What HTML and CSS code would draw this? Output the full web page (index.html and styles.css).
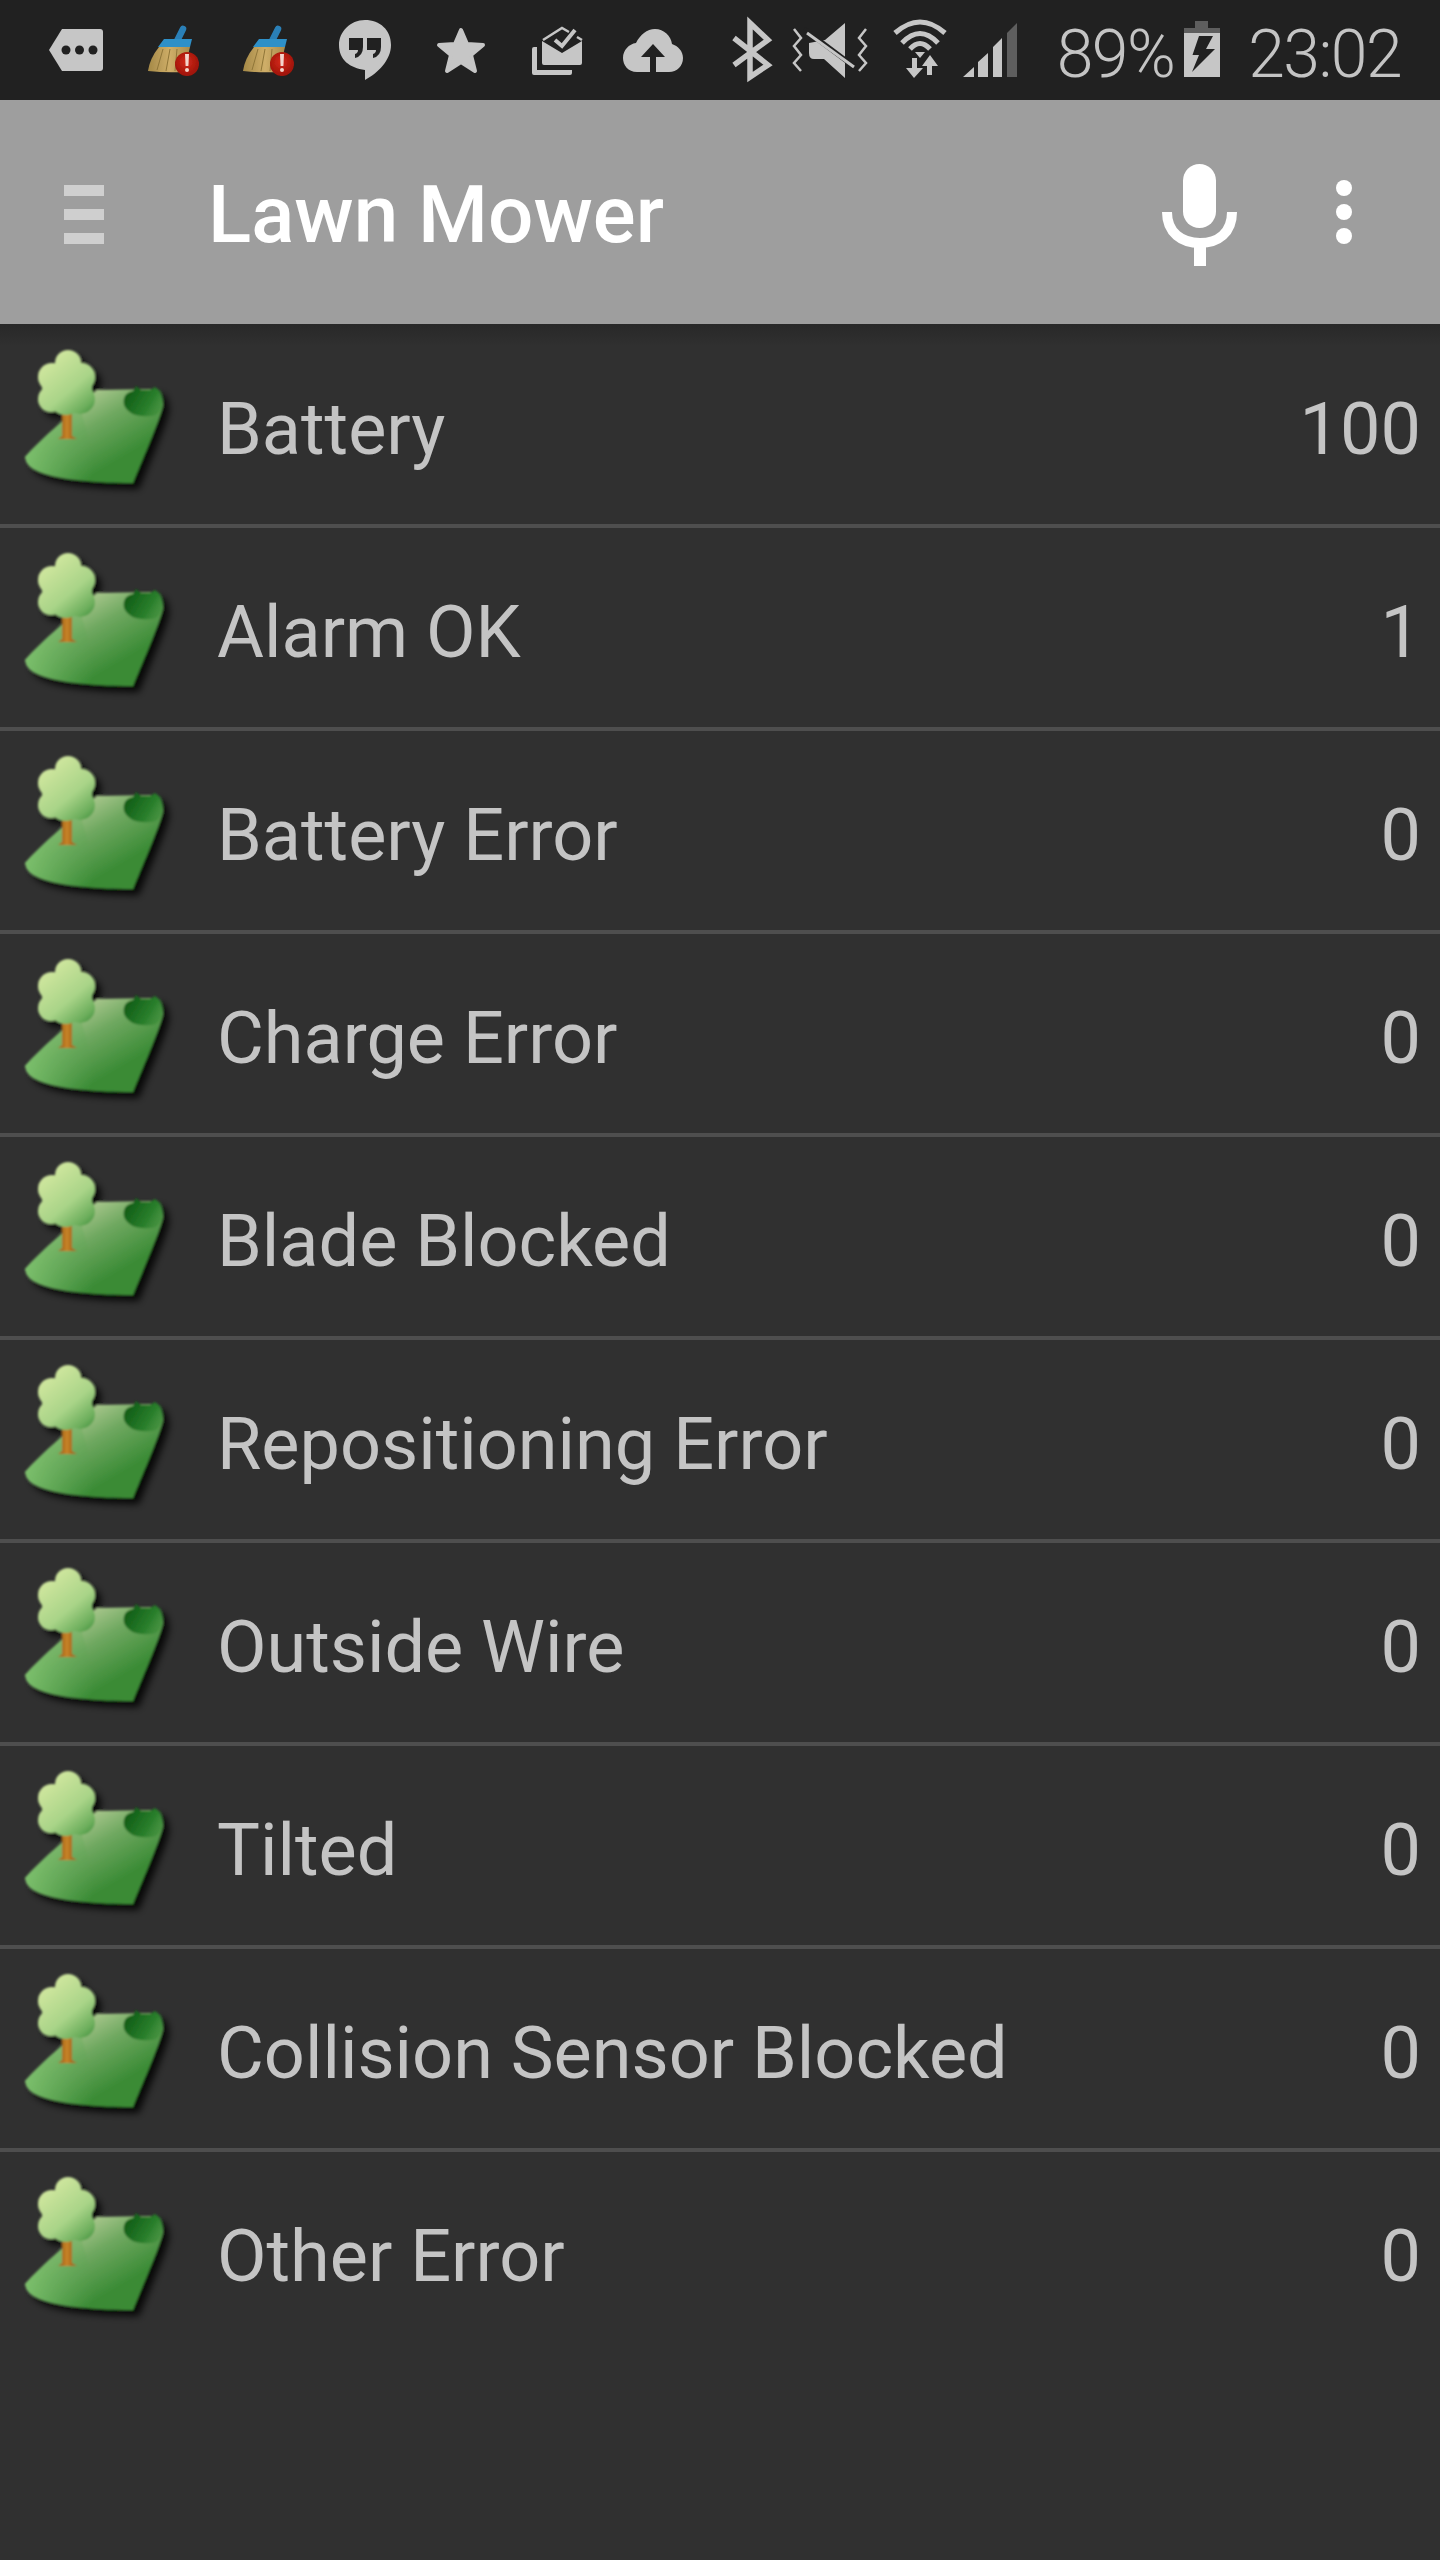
FILE: index.html
```html
<!DOCTYPE html>
<html lang="en">
<head>
<meta charset="utf-8">
<title>Lawn Mower</title>
<link rel="stylesheet" href="styles.css">
</head>
<body>
<svg class="sprite" aria-hidden="true">
  <defs>
    <linearGradient id="crown" gradientUnits="userSpaceOnUse" x1="45" y1="34" x2="92" y2="90">
      <stop offset="0" stop-color="#d3e8a0"/><stop offset=".55" stop-color="#a9d488"/><stop offset=".85" stop-color="#6cae5c"/><stop offset="1" stop-color="#3f8f3b"/>
    </linearGradient>
    <linearGradient id="ground" gradientUnits="userSpaceOnUse" x1="88" y1="62" x2="128" y2="130">
      <stop offset="0" stop-color="#b4cd95"/><stop offset=".45" stop-color="#6fa860"/><stop offset="1" stop-color="#3a8b35"/>
    </linearGradient>
    <linearGradient id="groundLeft" gradientUnits="userSpaceOnUse" x1="25" y1="130" x2="95" y2="140">
      <stop offset="0" stop-color="#7cc06c"/><stop offset="1" stop-color="#4f9f49" stop-opacity="0"/>
    </linearGradient>
    <linearGradient id="bush" gradientUnits="userSpaceOnUse" x1="128" y1="66" x2="164" y2="88">
      <stop offset="0" stop-color="#0f5c15"/><stop offset=".6" stop-color="#2a7f2c"/><stop offset="1" stop-color="#3f8f3a" stop-opacity=".4"/>
    </linearGradient>
    <linearGradient id="trunk" gradientUnits="userSpaceOnUse" x1="62" y1="0" x2="72" y2="0">
      <stop offset="0" stop-color="#a96a1c"/><stop offset=".5" stop-color="#c98428"/><stop offset="1" stop-color="#a8681b"/>
    </linearGradient>
    <linearGradient id="bristle" gradientUnits="userSpaceOnUse" x1="150" y1="0" x2="190" y2="0">
      <stop offset="0" stop-color="#a88c4a"/><stop offset=".5" stop-color="#cfae68"/><stop offset="1" stop-color="#a98c4c"/>
    </linearGradient>
    <radialGradient id="badge" gradientUnits="userSpaceOnUse" cx="186" cy="62" r="13">
      <stop offset="0" stop-color="#d42a1a"/><stop offset="1" stop-color="#a01409"/>
    </radialGradient>
    <filter id="soft" x="-20%" y="-20%" width="140%" height="140%">
      <feGaussianBlur stdDeviation="1.1"/>
    </filter>
    <filter id="shade" x="-20%" y="-20%" width="150%" height="150%">
      <feDropShadow dx="6" dy="6" stdDeviation="3.5" flood-color="#000" flood-opacity=".85"/>
    </filter>
    <filter id="tiny" x="-10%" y="-10%" width="120%" height="120%">
      <feGaussianBlur stdDeviation=".4"/>
    </filter>
    <symbol id="lawn" viewBox="0 0 200 199">
      <g filter="url(#shade)">
        <g filter="url(#soft)">
          <path fill="url(#ground)" d="M25 132C40 115 75 85 97 65L150 64Q162 64 163 80C160 95 140 140 133 158C100 158 60 155 40 147Q26 142 25 132Z"/>
          <path fill="url(#groundLeft)" d="M25 132C40 115 62 96 80 81L100 157C75 156 55 153 40 147Q26 142 25 132Z"/>
          <path fill="url(#bush)" d="M124 80Q122 68 133 66L136 61L141 65L150 65L155 62L160 66Q164 72 162 82Q158 92 150 91Q130 93 124 80Z"/>
          <path fill="url(#trunk)" d="M62 88H72V111L77 114H58L62 111Z"/>
          <g fill="url(#crown)">
            <circle cx="68" cy="38" r="13"/><circle cx="52" cy="52" r="14"/><circle cx="81" cy="52" r="14"/>
            <circle cx="51" cy="74" r="13"/><circle cx="80" cy="74" r="15"/><circle cx="67" cy="62" r="25"/><circle cx="66" cy="73" r="17"/>
          </g>
        </g>
      </g>
    </symbol>
    <symbol id="broom" viewBox="125 0 96 100">
      <g filter="url(#tiny)">
        <path fill="none" stroke="#2b80b8" stroke-width="6.5" stroke-linecap="round" d="M183 29L177 41"/>
        <path fill="url(#bristle)" d="M159 47Q150 58 148 71Q166 73 184 72L190 47Z"/>
        <path fill="none" stroke="#8f7538" stroke-width="1" d="M163 49L157 70M170 49L166 71M177 49L175 71"/>
        <path fill="#2f90c8" d="M164 39H192L190 47H158Z"/>
        <circle cx="187" cy="64" r="12" fill="url(#badge)"/>
        <path fill="#f4d5cc" d="M185 54H189L188.4 66H185.6Z"/>
        <circle cx="187" cy="70" r="2" fill="#f4d5cc"/>
      </g>
    </symbol>
  </defs>
</svg>

<header class="status">
  <div class="status-left">
    <svg class="cell" viewBox="29 0 96 100"><path class="ic" d="M49 50L62 29H100Q103 29 103 32V68Q103 71 100 71H62Z"/><g class="cut"><circle cx="66" cy="50" r="4.5"/><circle cx="79.500" cy="50" r="4.500"/><circle cx="93" cy="50" r="4.500"/></g></svg>
    <svg class="cell" viewBox="125 0 96 100"><use href="#broom" x="125" y="0" width="96" height="100"/></svg>
    <svg class="cell" viewBox="126 0 96 100"><use href="#broom" x="125" y="0" width="96" height="100"/></svg>
    <svg class="cell" viewBox="317 0 96 100"><path class="ic" d="M365 20C350 20 339 32 339 45C339 60 350 68 365 70V80C378 73 391 60 391 45C391 30 380 20 365 20Z"/><path class="cut" d="M349 38H363V47Q363 56 355 58V54Q358 53 358 50H349ZM367 38H381V47Q381 56 373 58V54Q376 53 376 50H367Z"/></svg>
    <svg class="cell" viewBox="413 0 96 100"><path class="ic star" d="M461 30L467 44L483 45L471 55L475 71L461 62L447 71L451 55L439 45L455 44Z"/></svg>
    <svg class="cell" viewBox="509 0 96 100"><path class="ic" d="M542 41L562 53L582 41V63Q582 65 580 65H544Q542 65 542 63Z"/><path class="ic" d="M532 49Q532 47 534 47H537V70H572V73Q572 75 570 75H534Q532 75 532 73Z"/><path class="line" d="M543 40L562 28L569 32M577 37L582 40"/><path class="check" d="M555 40L562 46L575 30"/></svg>
    <svg class="cell" viewBox="605 0 96 100"><path class="ic" d="M637 72C628 72 623 65 623 58C623 50 629 44 636 43C640 35 647 29 655 29C664 29 671 36 672 44C678 46 683 51 683 58C683 66 677 72 669 72Z"/><path class="cut" d="M653 44L665 57H656V72H650V57H641Z"/></svg>
  </div>
  <div class="status-right">
    <svg class="bt" viewBox="725 0 60 100"><path class="line thick" d="M738 38L772 65L754 77V23L772 40L738 65"/></svg>
    <svg class="vib" viewBox="785 0 100 100"><path class="line" d="M798 29L805 38L798 46L805 55L798 63L805 71M870 29L863 38L870 46L863 55L870 63L863 71"/><path class="ic" d="M849 23V78L828 59H818Q813 59 813 53V43L829 40Z"/><path class="gap" d="M808 29L860 68"/><path class="line slash" d="M811 33L858 67"/></svg>
    <svg class="wifi" viewBox="885 0 75 100"><path class="line arc" d="M899 33Q924 11 949 33M906 43Q924 24 942 43M914 49Q924 38 934 49"/><path class="ic" d="M919 52H929L924 58ZM916 58H921V68H927L918 78L910 68H916ZM934 55L942 66H936V75H931V66H926Z"/></svg>
    <svg class="signal" viewBox="960 0 70 100"><path class="ic" d="M967 77L978 67V77ZM982 62L992 53V77H982ZM997 47L1006 38V77H997Z"/><path class="dim" d="M1011 33L1021 23V77H1011Z"/></svg>
    <span class="pct">89%</span>
    <svg class="batt" viewBox="1180 0 48 100"><path class="dim" d="M1197 21H1210V28H1222V33H1186V28H1197Z"/><path class="ic" d="M1186 33H1222V77H1186Z"/><path class="cut" d="M1201 36H1215L1208 49H1217L1194 72L1201 55H1194.500Z"/></svg>
    <span class="clock">23:02</span>
  </div>
</header>

<div class="toolbar">
  <div class="burger"><span></span><span></span><span></span></div>
  <h1 class="title">Lawn Mower</h1>
  <svg class="mic" viewBox="1150 150 100 130"><rect class="white" x="1183" y="164" width="33" height="64" rx="16.500"/><path class="mic-arc" d="M1167 212C1167 233 1182 243 1200 243C1218 243 1232 233 1232 212"/><rect class="white" x="1194" y="243" width="12" height="23"/></svg>
  <svg class="dots" viewBox="1320 170 48 84"><circle class="white" cx="1344" cy="188" r="8"/><circle class="white" cx="1344" cy="212" r="8"/><circle class="white" cx="1344" cy="236" r="8"/></svg>
</div>

<ul class="list">
  <li class="row"><svg class="lawn"><use href="#lawn"/></svg><span class="name">Battery</span><span class="value">100</span></li>
  <li class="row"><svg class="lawn"><use href="#lawn"/></svg><span class="name">Alarm OK</span><span class="value">1</span></li>
  <li class="row"><svg class="lawn"><use href="#lawn"/></svg><span class="name">Battery Error</span><span class="value">0</span></li>
  <li class="row"><svg class="lawn"><use href="#lawn"/></svg><span class="name">Charge Error</span><span class="value">0</span></li>
  <li class="row"><svg class="lawn"><use href="#lawn"/></svg><span class="name">Blade Blocked</span><span class="value">0</span></li>
  <li class="row"><svg class="lawn"><use href="#lawn"/></svg><span class="name">Repositioning Error</span><span class="value">0</span></li>
  <li class="row"><svg class="lawn"><use href="#lawn"/></svg><span class="name">Outside Wire</span><span class="value">0</span></li>
  <li class="row"><svg class="lawn"><use href="#lawn"/></svg><span class="name">Tilted</span><span class="value">0</span></li>
  <li class="row"><svg class="lawn"><use href="#lawn"/></svg><span class="name">Collision Sensor Blocked</span><span class="value">0</span></li>
  <li class="row"><svg class="lawn"><use href="#lawn"/></svg><span class="name">Other Error</span><span class="value">0</span></li>
</ul>
</body>
</html>
```
FILE: styles.css
```css
* { box-sizing: border-box; }
html, body { margin: 0; padding: 0; }
body {
  width: 1440px;
  height: 2560px;
  overflow: hidden;
  background: #303030;
  color: #c4c4c4;
  font-family: Roboto, "Liberation Sans", sans-serif;
}
.sprite { display: block; width: 0; height: 0; overflow: hidden; }

/* status bar */
.status {
  display: flex;
  justify-content: space-between;
  height: 100px;
  padding: 0 39px 0 29px;
  background: #212121;
}
.status-left, .status-right { display: flex; align-items: center; height: 100px; }
.status svg { display: block; height: 100px; flex: none; }
.cell { width: 96px; }
.bt { width: 60px; }
.vib { width: 100px; }
.wifi { width: 75px; }
.signal { width: 70px; }
.batt { width: 48px; }
.ic { fill: #c6c6c6; }
.cut { fill: #212121; }
.dim { fill: #5e5e5e; }
.star { stroke: #c6c6c6; stroke-width: 4; stroke-linejoin: round; }
.line { fill: none; stroke: #c6c6c6; stroke-width: 2.5; }
.thick { stroke-width: 5.5; }
.arc { stroke-width: 5; }
.slash { stroke-width: 3; }
.gap { fill: none; stroke: #212121; stroke-width: 5; }
.check { fill: none; stroke: #c6c6c6; stroke-width: 4; }
.pct, .clock {
  font-weight: 300;
  font-size: 66px;
  line-height: 100px;
  letter-spacing: -1.5px;
  padding-top: 9px;
}
.pct { margin-left: 31px; margin-right: 4px; }
.clock { margin-left: 22px; }

/* toolbar */
.toolbar {
  display: flex;
  align-items: center;
  height: 224px;
  padding: 5px 0 0 64px;
  background: #9e9e9e;
}
.burger {
  display: flex;
  flex-direction: column;
  gap: 13px;
  width: 40px;
  flex: none;
}
.burger span { display: block; height: 11px; background: #cfcfcf; }
.title {
  flex: 1;
  margin: 0 0 0 104px;
  color: #fff;
  font-size: 80px;
  font-weight: 500;
  line-height: 100px;
}
.mic { display: block; width: 100px; height: 130px; flex: none; margin-right: 70px; }
.dots { display: block; width: 48px; height: 84px; flex: none; margin: 0 72px 5px 0; }
.white { fill: #fff; }
.mic-arc { fill: none; stroke: #fff; stroke-width: 10; }

/* list */
.list {
  position: relative;
  margin: 0;
  padding: 1px 0 0;
  list-style: none;
}
.list::before {
  content: "";
  position: absolute;
  top: 0;
  left: 0;
  right: 0;
  height: 22px;
  background: linear-gradient(#282828, #303030);
}
.row {
  position: relative;
  display: flex;
  align-items: center;
  height: 203px;
  padding-right: 19px;
  border-bottom: 4px solid #4e4e4e;
}
.row:last-child { height: 199px; border-bottom: 0; }
.lawn { display: block; width: 200px; height: 199px; flex: none; }
.name, .value {
  font-size: 72px;
  line-height: 90px;
  padding-top: 10px;
}
.name { flex: 1; margin-left: 17px; }
.value { text-align: right; }
```
